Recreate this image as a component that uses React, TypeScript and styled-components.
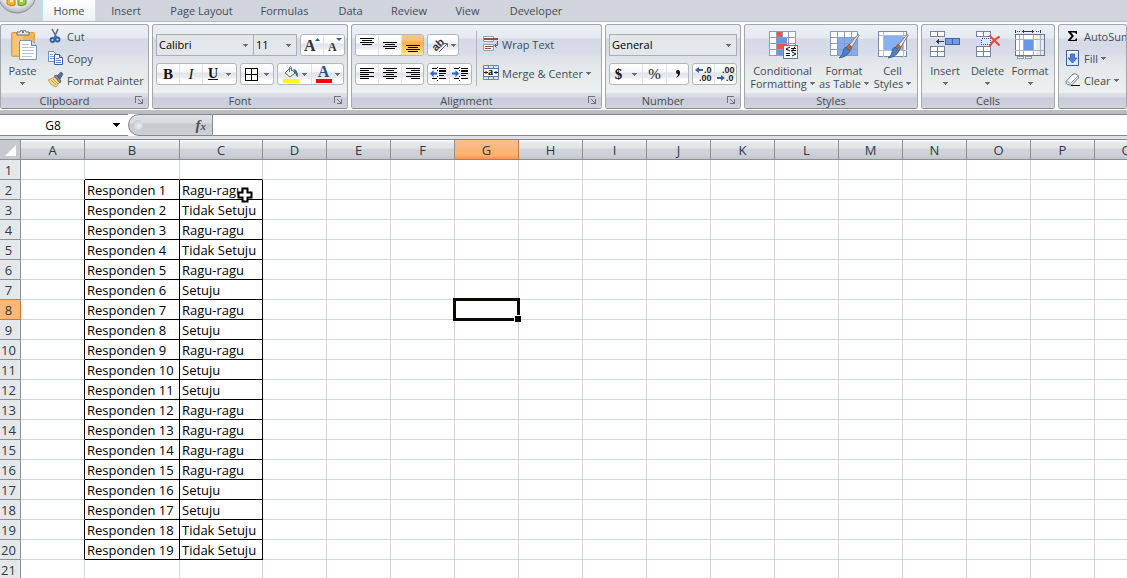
import React from "react";
import styled, { createGlobalStyle, css } from "styled-components";

const GlobalStyle = createGlobalStyle`
  * { box-sizing: border-box; }
  body { margin: 0; background: #fff; }
  button, input, select { font: inherit; color: inherit; margin: 0; }
`;

const uiFont = `"Open Sans", "Noto Sans", sans-serif`;

const Window = styled.div`
  display: flex;
  flex-direction: column;
  height: 100vh;
  overflow: hidden;
  background: #fff;
  color: #454c55;
  font: 11px/13px ${uiFont};
`;

/* ---------- Tab strip ---------- */

const TabStrip = styled.nav`
  display: flex;
  flex: none;
  height: 22px;
  overflow: hidden;
  background: #d0d4dc;
  border-bottom: 1px solid #b4b8bf;
`;

const OfficeButton = styled.button`
  flex: none;
  width: 42px;
  height: 22px;
  padding: 0;
  border: 0;
  background: none;
`;

const Tab = styled.button<{ $width: number; $active?: boolean }>`
  flex: none;
  width: ${(p) => p.$width}px;
  height: 22px;
  padding: 0 0 1px;
  border: 1px solid transparent;
  border-width: 0 1px;
  background: none;
  white-space: nowrap;
  ${(p) =>
    p.$active &&
    css`
      background: linear-gradient(#fff, #f2f5f9 60%, #eceff5);
      border-color: #b9e6ee;
    `}
`;

/* ---------- Ribbon ---------- */

const Ribbon = styled.div`
  display: flex;
  flex: none;
  gap: 3px;
  padding: 2px 0 1px;
  background: #fff;
`;

const Group = styled.section<{ $width?: number }>`
  display: flex;
  flex-direction: column;
  flex: ${(p) => (p.$width ? `0 0 ${p.$width}px` : "1 0 0")};
  min-width: 0;
  overflow: hidden;
  height: 85px;
  border: 1px solid #a3a6ab;
  border-bottom-color: #85888e;
  border-radius: 3px;
  background: linear-gradient(
    #eceff5 0,
    #e5e9f1 13px,
    #d4d9e6 14px,
    #d7dce8 28px,
    #dfe3ea 33px,
    #e5e9eb 45px,
    #ebf0f0 68px
  );
`;

const GroupBody = styled.div<{ $left?: number; $gap?: number }>`
  display: flex;
  flex: 1;
  gap: ${(p) => p.$gap ?? 0}px;
  padding-left: ${(p) => p.$left ?? 3}px;
`;

const GroupTitle = styled.footer`
  display: flex;
  align-items: center;
  flex: none;
  height: 15px;
  padding: 0 4px;
  background: linear-gradient(#dde1ea 0, #d6dae4 4px, #c9cddb 5px, #ccd0db 11px, #d0d4dc);

  h2 {
    flex: 1;
    margin: 0;
    font: inherit;
    text-align: center;
    white-space: nowrap;
  }
`;

const Launcher = styled.button`
  display: flex;
  justify-content: flex-end;
  width: 20px;
  padding: 0;
  border: 0;
  background: none;
`;

const Rows = styled.div`
  display: flex;
  flex-direction: column;
  gap: 7px;
  padding-top: 9px;
`;

const Row = styled.div<{ $gap?: number }>`
  display: flex;
  gap: ${(p) => p.$gap ?? 3}px;
`;

const ButtonSet = styled.div`
  display: flex;
  height: 22px;
  border: 1px solid #b4b6ba;
  border-radius: 3px;
  overflow: hidden;
  background: linear-gradient(#fff 0, #f6f7f9 8px, #e0e3ea 9px, #eceef2 14px, #fdfdfd 15px);
`;

const SetButton = styled.button<{ $width: number; $on?: boolean; $gap?: number }>`
  display: flex;
  align-items: center;
  justify-content: center;
  gap: ${(p) => p.$gap ?? 6}px;
  width: ${(p) => p.$width}px;
  padding: 0;
  border: 0;
  background: ${(p) =>
    p.$on ? "linear-gradient(#f0c98e 0, #fbc06f 6px, #ffab4b 8px, #ffc86a 14px, #ffea9a)" : "none"};
  color: #111;

  & + & {
    border-left: 1px solid #dfe1e5;
  }
  svg {
    flex: none;
  }
`;

const Glyph = styled.span<{ $size?: number; $bold?: boolean; $italic?: boolean; $underline?: boolean }>`
  font-family: "Liberation Serif", serif;
  font-size: ${(p) => p.$size ?? 15}px;
  line-height: 16px;
  font-weight: ${(p) => (p.$bold ? 700 : 400)};
  font-style: ${(p) => (p.$italic ? "italic" : "normal")};
  text-decoration: ${(p) => (p.$underline ? "underline" : "none")};
`;

const Combo = styled.span<{ $width: number }>`
  display: grid;
  align-items: center;
  width: ${(p) => p.$width}px;
  height: 22px;
  color: #000;

  select,
  svg {
    grid-area: 1 / 1;
  }
  select {
    appearance: none;
    width: 100%;
    height: 22px;
    padding: 0 2px 2px;
    border: 1px solid #abafb4;
    border-radius: 0;
    background: #e3e7ea;
  }
  svg {
    justify-self: end;
    margin-right: 6px;
    pointer-events: none;
  }
`;

const ComboRow = styled(Row)`
  ${Combo} + ${Combo} {
    margin-left: -4px;
  }
`;

const Divider = styled.span`
  width: 1px;
  height: 55px;
  margin: 6px 2px 0 4px;
  background: #b3b6bd;
`;

const LabelButton = styled.button`
  display: flex;
  align-items: center;
  gap: 3px;
  height: 22px;
  padding: 0 0 2px;
  border: 0;
  background: none;
  white-space: nowrap;
`;

const LabelStack = styled.div`
  display: flex;
  flex-direction: column;
  align-items: flex-start;
  padding-top: 1px;
`;

const BigButton = styled.button<{ $width: number }>`
  display: flex;
  flex-direction: column;
  align-items: center;
  flex: none;
  width: ${(p) => p.$width}px;
  padding: 5px 0 0;
  border: 0;
  background: none;
  white-space: nowrap;

  > svg {
    flex: none;
    margin-bottom: 2px;
  }
`;

const SecondLine = styled.span`
  display: flex;
  align-items: center;
  justify-content: center;
  gap: 3px;
  height: 13px;
`;

/* ---------- Formula bar ---------- */

const FormulaBar = styled.div`
  display: flex;
  flex: none;
  height: 29px;
  border-top: 4px solid #bbbdc3;
  border-bottom: 3px solid #dde1ea;
  background: #fff;
  color: #000;
`;

const NameBox = styled.div`
  display: flex;
  align-items: center;
  width: 128px;
  border: solid #85878b;
  border-width: 1px 0;

  input {
    width: 106px;
    padding: 0;
    border: 0;
    background: none;
    text-align: center;
    font-size: 12px;
  }
  button {
    width: 22px;
    padding: 0;
    border: 0;
    background: none;
  }
  svg {
    display: block;
    margin: 0 auto;
  }
`;

const FunctionPill = styled.div`
  display: flex;
  align-items: center;
  justify-content: space-between;
  width: 85px;
  padding: 0 6px 0 4px;
  border: 1px solid #85878b;
  border-radius: 11px 0 0 11px;
  background: linear-gradient(#dfe2e4 0, #d6dadd 8px, #c5c8ce 9px, #cdd0d4);

  button {
    padding: 0;
    border: 0;
    background: none;
    color: #4a4f5c;
    font: italic 700 15px/16px "Liberation Serif", serif;
  }
  small {
    font-size: 11px;
  }
`;

const Dimple = styled.span`
  width: 10px;
  height: 10px;
  border-radius: 50%;
  background: radial-gradient(circle at 60% 60%, #eef0f1, #b9bcc2);
`;

const FormulaInput = styled.input`
  flex: 1;
  min-width: 0;
  padding: 0 4px;
  border: solid #85878b;
  border-width: 1px 0;
  border-radius: 0;
  background: #fff;
`;

/* ---------- Sheet ---------- */

const Sheet = styled.main`
  flex: 1;
  overflow: hidden;
  border-top: 1px solid #85878f;
`;

const Grid = styled.table`
  width: max-content;
  table-layout: fixed;
  border-collapse: separate;
  border-spacing: 0;
  color: #000;
  font-size: 13px;
  line-height: 17px;
`;

const ColumnHead = styled.th<{ $width: number; $selected?: boolean }>`
  width: ${(p) => p.$width}px;
  height: 20px;
  padding: 2px 0 0;
  border: solid #8c8f94;
  border-width: 0 1px 1px 0;
  background: linear-gradient(#fbfbfc 0, #e6e9ea 3px, #e0e4e7 8px, #d0d4da 9px, #ced2d8 14px, #c3c6ca);
  color: #2b3a44;
  font-weight: 400;
  ${(p) =>
    p.$selected &&
    css`
      border-color: #cf7440;
      background: linear-gradient(#fac090 0, #f9b582 9px, #ffb56e 10px, #ffb470 15px, #f9915c);
    `}
`;

const Corner = styled(ColumnHead)`
  background: #c6c9ce;

  svg {
    display: block;
    margin-left: 5px;
  }
`;

const RowHead = styled.th<{ $selected?: boolean }>`
  height: 20px;
  padding: 2px 3px 0 0;
  border: solid #8c8f94;
  border-width: 0 1px 1px 0;
  background: ${(p) => (p.$selected ? "#fdb878" : "#e4e8ea")};
  border-color: ${(p) => (p.$selected ? "#cf7440" : "#8c8f94")};
  color: #2b3a44;
  font-weight: 400;
`;

const Cell = styled.td<{ $right?: boolean; $bottom?: boolean }>`
  position: relative;
  height: 20px;
  padding: 2px 0 0 2px;
  border: solid #d0d5e5;
  border-width: 0 1px 1px 0;
  border-right-color: ${(p) => (p.$right ? "#000" : "#d0d5e5")};
  border-bottom-color: ${(p) => (p.$bottom ? "#000" : "#d0d5e5")};
  white-space: nowrap;
`;

const Selection = styled.div`
  position: absolute;
  inset: -2px;
  z-index: 1;
  border: 3px solid #0d0905;

  &::after {
    content: "";
    position: absolute;
    right: -4px;
    bottom: -4px;
    width: 6px;
    height: 6px;
    background: #000;
    border: solid #fff;
    border-width: 1px 0 0 1px;
  }
`;

const Pointer = styled.svg`
  position: absolute;
  left: 57px;
  top: 7px;
  z-index: 2;
`;

/* ---------- Icons ---------- */

const Arrow = ({ color = "#6b6e74" }: { color?: string }) => (
  <svg width="5" height="3" viewBox="0 0 5 3" shapeRendering="crispEdges" aria-hidden="true">
    <path d="M0 0h5v1H4v1H3v1H2V2H1V1H0z" fill={color} />
  </svg>
);

const Lines = ({ rows, y }: { rows: [number, number][]; y: number }) => (
  <svg width="16" height="16" shapeRendering="crispEdges" aria-hidden="true">
    {rows.map(([x, w], i) => (
      <rect key={i} x={x} y={y + i * 2} width={w} height="1" fill="#000" />
    ))}
  </svg>
);

const OfficeLogo = () => (
  <svg width="42" height="22" aria-hidden="true">
    <defs>
      <radialGradient id="orb" cx="50%" cy="40%" r="60%">
        <stop offset="0" stopColor="#fff" />
        <stop offset="0.75" stopColor="#dfe1e6" />
        <stop offset="1" stopColor="#a9adb5" />
      </radialGradient>
    </defs>
    <circle cx="17" cy="-6" r="19" fill="url(#orb)" stroke="#8b8f97" />
    <path d="M7-4h8v9q-4 2-8-1z" fill="#f6b62f" stroke="#d9760f" />
    <path d="M10-2h3v4h-3z" fill="#fff2c4" />
    <path d="M18-4h8v8q-4 3-8 1z" fill="#9cca3c" stroke="#5d9a1d" />
    <path d="M20-2h3v4h-3z" fill="#ecf7cf" />
  </svg>
);

const PasteIcon = () => (
  <svg width="32" height="32" aria-hidden="true">
    <rect x="4.500" y="2.500" width="23" height="24" rx="1" fill="#f0b65a" stroke="#d9a04a" />
    <path d="M6 4h10v21H6z" fill="#f8cc80" opacity=".7" />
    <path d="M10 5V2h3q0-2 3-2t3 2h3v3z" fill="#e6e8ec" stroke="#6b6e75" />
    <circle cx="16" cy="2" r="1" fill="#555" />
    <path d="M12.500 10.500h12l5 5v14h-17z" fill="#fff" stroke="#7f93b8" />
    <path d="M24.500 10.500v5h5" fill="#cfdcf3" stroke="#6481b5" />
    <path d="M15 14.500h7M15 17.500h12M15 20.500h12M15 23.500h12M15 26.500h10" stroke="#b6c2d8" />
  </svg>
);

const CutIcon = () => (
  <svg width="16" height="16" fill="none" aria-hidden="true">
    <path d="M4 1l5 9M10 1L6 10" stroke="#54698d" strokeWidth="1.500" />
    <ellipse cx="4.500" cy="12" rx="2" ry="2" stroke="#2f5ea8" strokeWidth="1.800" />
    <ellipse cx="9.500" cy="11.500" rx="2" ry="2" stroke="#2f5ea8" strokeWidth="1.800" />
  </svg>
);

const CopyIcon = () => (
  <svg width="16" height="16" aria-hidden="true">
    <path d="M.5 1.500h5l3 3v7h-8z" fill="#f8fbff" stroke="#6d8fc9" />
    <path d="M2 4.500h3M2 6.500h4M2 8.500h4" stroke="#7ba2de" />
    <path d="M6.500 4.500h5l3 3v7h-8z" fill="#f8fbff" stroke="#35609f" />
    <path d="M11.500 4.500v3h3" fill="#bcd2f5" stroke="#35609f" />
    <path d="M8 8.500h3M8 10.500h5M8 12.500h5" stroke="#5d8ad0" />
  </svg>
);

const PainterIcon = () => (
  <svg width="16" height="16" aria-hidden="true">
    <path d="M0 8l7-3 5 5-4 5q-5-1-8-7z" fill="#f5d785" stroke="#b8944a" strokeWidth=".8" />
    <path d="M3 8l5 5M5 7l5 5" stroke="#c79f4c" />
    <path d="M6 4l3-1 4 6-1 2z" fill="#8d8f9c" stroke="#4c4d58" strokeWidth=".7" />
    <path d="M9 4l4-4 2 2-3 5z" fill="#5c6f9c" stroke="#3a4a70" strokeWidth=".7" />
  </svg>
);

const LauncherIcon = () => (
  <svg width="9" height="9" shapeRendering="crispEdges" aria-hidden="true">
    <path d="M0 0h7v1H1v6H0z" fill="#6f737b" />
    <path d="M3 3h1v1h1v1h1v1h1V3h1v5H3V7h3V6H5V5H4V4H3z" fill="#6f737b" />
  </svg>
);

const BordersIcon = () => (
  <svg width="13" height="13" shapeRendering="crispEdges" aria-hidden="true">
    <path d="M.5.5h12v12H.5zM6.500 0v13M0 6.500h13" fill="#fff" stroke="#000" />
  </svg>
);

const FillColorIcon = () => (
  <svg width="16" height="18" aria-hidden="true">
    <path d="M2 8l5-5 5 5-5 4z" fill="#eef3fb" stroke="#5a6a86" />
    <path d="M6.500 7V2.500q1.500-2 2 0V6" fill="none" stroke="#5a6a86" />
    <path d="M10 4q5 0 5 8-2-1-3-4z" fill="#3a62ad" />
    <path d="M0 14h16v4H0z" fill="#ff0" />
  </svg>
);

const FontColorBar = styled.span`
  display: block;
  width: 16px;
  height: 18px;
  border-bottom: 4px solid #f00;
  color: #2c4f92;
  font: 700 16px/14px "Liberation Serif", serif;
`;

const OrientationIcon = () => (
  <svg width="18" height="20" aria-hidden="true">
    <text x="0" y="13" transform="rotate(-45 7 9)" fontFamily="Liberation Sans, sans-serif" fontSize="11" fontWeight="700" fill="#333">
      ab
    </text>
    <path d="M8 17l8-8M13 8.500h3.500V12" fill="none" stroke="#7a5a72" />
  </svg>
);

const IndentIcon = ({ right }: { right?: boolean }) => (
  <svg width="17" height="16" aria-hidden="true">
    <g shapeRendering="crispEdges" fill="#000">
      <path d="M2 2h5v1H2zM9 2h7v1H9zM9 5h7v1H9zM9 7h7v1H9zM9 9h5v1H9zM2 12h5v1H2zM9 12h7v1H9z" />
      <path d="M7 1h1v1H7zM7 4h1v1H7zM7 10h1v1H7zM7 14h1v1H7zM9 4h7v1H9z" />
    </g>
    <path d={right ? "M7 7.500L3.500 4v2.500H0v2h3.500V11z" : "M0 7.500L3.500 4v2.500H7v2H3.500V11z"} fill="#2f62c0" />
  </svg>
);

const WrapIcon = () => (
  <svg width="16" height="16" aria-hidden="true">
    <path d="M.5.5h10v5H.5zM.5 8.500h10v6H.5z" fill="#fff" stroke="#8fa0ba" />
    <path d="M1 2h14v2H1z" fill="#8f4f30" />
    <path d="M2 10.500h8M2 12.500h6" stroke="#a0522d" />
    <path d="M14.500 5v4.500H12M13.500 7.500l-2 2 2 2" fill="none" stroke="#44629a" />
  </svg>
);

const MergeIcon = () => (
  <svg width="16" height="16" aria-hidden="true">
    <path d="M.5.5h15v14H.5zM5.500.5v3M10.500.5v3M5.500 11.500v3M10.500 11.500v3" fill="#dce9f8" stroke="#6487b5" />
    <path d="M.5 3.500h15v8H.5z" fill="#fff" stroke="#4775a8" />
    <path d="M1 7.500h4M11 7.500h4M3 6v3M13 6v3" stroke="#222" />
    <text x="5" y="10" fontFamily="Liberation Serif, serif" fontSize="10" fontWeight="700" fill="#000">a</text>
  </svg>
);

const DecimalIcon = ({ more }: { more?: boolean }) => (
  <svg width="18" height="18" aria-hidden="true">
    <g fontFamily="Liberation Sans, sans-serif" fontSize="9" fontWeight="700" fill="#222">
      <text x={more ? 9 : 5} y="8">{more ? ".0" : ".00"}</text>
      <text x={more ? 4 : 9} y="16">{more ? ".00" : ".0"}</text>
    </g>
    {more ? (
      <path d="M0 5l4-3v2h4v2H4v2z" fill="#2f5fb0" />
    ) : (
      <path d="M8 13l-4-3v2H0v2h4v2z" fill="#2f5fb0" />
    )}
  </svg>
);

const ConditionalIcon = () => (
  <svg width="32" height="32" aria-hidden="true">
    <g shapeRendering="crispEdges">
      <path d="M2 1h27v25H2z" fill="#fff" />
      <path d="M9 1h7v7H9zM9 13h11v7H9z" fill="#f4563e" />
      <path d="M9 7h11v6H9zM9 20h7v6H9z" fill="#6a93ea" />
      <path d="M2.500 1v25M9.500 1v25M15.500 1v6M15.500 20v6M21.500 1v25M28.500 1v25M2 1.500h27M2 7.500h27M2 13.500h27M2 19.500h27M2 25.500h14" stroke="#8d9dbd" fill="none" />
      <path d="M16.500 15.500h14v13h-14z" fill="#f6f9fb" stroke="#627fa0" />
    </g>
    <path d="M23 17l-4 2 4 2M19 23.500h4M19 25.500h4M24 18.500h5M24 20.500h5M28 16.500l-3 5M25 22l4 2-4 2" fill="none" stroke="#111" />
  </svg>
);

const Brush = () => (
  <g>
    <path d="M31 5.500l-8 13-3-2 9-11q2-2 2 0z" fill="#e9e4de" stroke="#7e7a78" />
    <path d="M24 17l-2 4-4-3 3-4z" fill="#b06a3c" stroke="#7c4a2c" strokeWidth=".6" />
    <path d="M18 17l4 4q-3 6-11 7 4-3 4-6 0-4 3-5z" fill="#4f7dc0" stroke="#34598f" strokeWidth=".8" />
  </g>
);

const FormatTableIcon = () => (
  <svg width="32" height="32" aria-hidden="true">
    <g shapeRendering="crispEdges">
      <path d="M2 1h28v25H2z" fill="#fff" />
      <path d="M9 7h21v19H9z" fill="#86acf0" />
      <path d="M2 1.500h28M2 7.500h28M2 13.500h28M2 19.500h28M2 25.500h28M2.500 1v25M9.500 1v25M16.500 1v25M23.500 1v25M29.500 1v25" stroke="#8b9cc0" />
    </g>
    <Brush />
  </svg>
);

const CellStylesIcon = () => (
  <svg width="32" height="32" aria-hidden="true">
    <g shapeRendering="crispEdges">
      <path d="M1.500 1.500h28v25h-28z" fill="#fff" stroke="#7b8aab" />
      <path d="M7 6h19v14H7z" fill="#88b0f4" />
      <path d="M2 5.500h28M2 20.500h28M6.500 2v25M26.500 2v25" stroke="#b3bdcf" />
    </g>
    <Brush />
  </svg>
);

const InsertIcon = () => (
  <svg width="32" height="32" shapeRendering="crispEdges" aria-hidden="true">
    <path d="M1.500 1.500h14v5h-14zM8.500 1v6M1.500 16.500h14v10h-14zM8.500 16v11M1 21.500h15" fill="#fff" stroke="#7682a0" />
    <path d="M16.500 8.500h14v6h-14z" fill="#6f9cec" stroke="#44639c" />
    <path d="M23.500 8v7" stroke="#44639c" />
    <path d="M7 11h8v1H7zM8 10h1v3H8zM9 9h1v5H9z" fill="#2d3b55" />
  </svg>
);

const DeleteIcon = () => (
  <svg width="32" height="32" aria-hidden="true">
    <g shapeRendering="crispEdges">
      <path d="M4.500 1.500h14v5h-14zM11.500 1v6M4.500 16.500h14v10h-14zM11.500 16v11M4 21.500h15" fill="#fff" stroke="#7682a0" />
      <path d="M9.500 8.500h9v6h-9z" fill="#dfe9fb" stroke="#3b5fa8" strokeDasharray="1 1" />
    </g>
    <path d="M18 6l9 9M27 7q-6 3-9 9" fill="none" stroke="#f2492c" strokeWidth="2" strokeLinecap="round" />
  </svg>
);

const FormatIcon = () => (
  <svg width="32" height="32" shapeRendering="crispEdges" aria-hidden="true">
    <path d="M1 0h1v3H1zM26 0h1v3h-1zM9 0h1v3H9zM18 0h1v3h-1zM8 1h12v1H8zM3 1h1v1H3zM5 1h1v1H5zM22 1h1v1h-1zM24 1h1v1h-1z" fill="#2d3b55" />
    <path d="M1.500 4.500h29v21h-29z" fill="#fff" stroke="#69758f" />
    <path d="M22 5h8v20h-8z" fill="#e7ebee" />
    <path d="M10 10h9v10h-9z" fill="#6796ea" />
    <path d="M1 9.500h29M1 20.500h29M9.500 5v20M19.500 5v20M26.500 5v20M5.500 5v20" stroke="#a9b2c4" />
    <path d="M3 26h6v2H3zM11 26h6v2h-6z" fill="#fff" stroke="#8b96ad" />
  </svg>
);

const SumIcon = () => (
  <svg width="16" height="16" aria-hidden="true">
    <path d="M3 3h9v3h-1l-1-1.500H6L9 8l-3.500 4H10l1-1.500h1V13H3v-1l3.500-4L3 4z" fill="#000" />
  </svg>
);

const FillIcon = () => (
  <svg width="16" height="16" aria-hidden="true">
    <path d="M1.500.5h12v15h-12z" fill="#dbe8fa" stroke="#39629f" />
    <path d="M2 1h11v2H2z" fill="#fff" />
    <path d="M5.500 4h4v4H12l-4.500 5L3 8h2.500z" fill="#4a80d8" stroke="#2c59a5" strokeWidth=".7" />
  </svg>
);

const ClearIcon = () => (
  <svg width="16" height="16" aria-hidden="true">
    <path d="M1 9.500L8 2q3-1 5 1.500L13.500 6l-7 7H4Q0 12 1 9.500z" fill="#fff" stroke="#6b7587" />
    <path d="M1 9.500Q4 9 6.500 13M6 11l7-7" fill="none" stroke="#8c9db8" />
    <path d="M6 13.500h9" stroke="#111" />
  </svg>
);

/* ---------- Data ---------- */

const tabs: [string, number][] = [
  ["Home", 54],
  ["Insert", 60],
  ["Page Layout", 91],
  ["Formulas", 75],
  ["Data", 57],
  ["Review", 60],
  ["View", 57],
  ["Developer", 80],
];

const columns = "ABCDEFGHIJKLMNOPQ".split("");
const columnWidth = (name: string) => (name === "B" ? 95 : name === "C" ? 83 : 64);

const R = "Ragu-ragu";
const S = "Setuju";
const T = "Tidak Setuju";
const answers = [R, T, R, T, R, S, R, S, R, S, S, R, R, R, R, S, S, T, T];
const rows = Array.from({ length: 21 }, (_, i) => i + 1);

const cellText = (column: string, row: number) => {
  if (row < 2 || row > 20) return "";
  if (column === "B") return `Responden ${row - 1}`;
  if (column === "C") return answers[row - 2];
  return "";
};

const Title = ({ children, launcher }: { children: string; launcher?: boolean }) => (
  <GroupTitle>
    <h2>{children}</h2>
    {launcher && (
      <Launcher aria-label={`${children} options`}>
        <LauncherIcon />
      </Launcher>
    )}
  </GroupTitle>
);

export default function App() {
  return (
    <Window>
      <GlobalStyle />
      <TabStrip>
        <OfficeButton aria-label="Office">
          <OfficeLogo />
        </OfficeButton>
        {tabs.map(([name, width]) => (
          <Tab key={name} $width={width} $active={name === "Home"}>
            {name}
          </Tab>
        ))}
      </TabStrip>

      <Ribbon>
        <Group $width={149}>
          <GroupBody $left={0} $gap={4}>
            <BigButton $width={43}>
              <PasteIcon />
              Paste
              <SecondLine>
                <Arrow />
              </SecondLine>
            </BigButton>
            <LabelStack>
              <LabelButton><CutIcon />Cut</LabelButton>
              <LabelButton><CopyIcon />Copy</LabelButton>
              <LabelButton><PainterIcon />Format Painter</LabelButton>
            </LabelStack>
          </GroupBody>
          <Title launcher>Clipboard</Title>
        </Group>

        <Group $width={196}>
          <GroupBody>
            <Rows>
              <ComboRow>
                <Combo $width={98}>
                  <select aria-label="Font"><option>Calibri</option></select>
                  <Arrow />
                </Combo>
                <Combo $width={44}>
                  <select aria-label="Font size"><option>11</option></select>
                  <Arrow />
                </Combo>
                <ButtonSet>
                  <SetButton $width={22} aria-label="Grow font">
                    <svg width="20" height="20" aria-hidden="true">
                      <text x="2" y="16" fontFamily="Liberation Serif, serif" fontSize="16" fontWeight="700" fill="#333">A</text>
                      <path d="M13 6l2.500-3L18 6z" fill="#2f57a8" />
                    </svg>
                  </SetButton>
                  <SetButton $width={21} aria-label="Shrink font">
                    <svg width="20" height="20" aria-hidden="true">
                      <text x="4" y="16" fontFamily="Liberation Serif, serif" fontSize="12" fontWeight="700" fill="#333">A</text>
                      <path d="M12 3h6l-3 3z" fill="#2f57a8" />
                    </svg>
                  </SetButton>
                </ButtonSet>
              </ComboRow>
              <Row>
                <ButtonSet>
                  <SetButton $width={22}><Glyph $bold>B</Glyph></SetButton>
                  <SetButton $width={23}><Glyph $italic>I</Glyph></SetButton>
                  <SetButton $width={34} $gap={8}><Glyph $bold $underline $size={14}>U</Glyph><Arrow /></SetButton>
                </ButtonSet>
                <ButtonSet>
                  <SetButton $width={32} aria-label="Borders"><BordersIcon /><Arrow /></SetButton>
                </ButtonSet>
                <ButtonSet>
                  <SetButton $width={33} $gap={3} aria-label="Fill color"><FillColorIcon /><Arrow /></SetButton>
                  <SetButton $width={32} $gap={3} aria-label="Font color"><FontColorBar>A</FontColorBar><Arrow /></SetButton>
                </ButtonSet>
              </Row>
            </Rows>
          </GroupBody>
          <Title launcher>Font</Title>
        </Group>

        <Group $width={251}>
          <GroupBody>
            <Rows>
              <Row>
                <ButtonSet>
                  <SetButton $width={22} aria-label="Top align">
                    <Lines y={1} rows={[[1, 14], [3, 10], [1, 14], [3, 10]]} />
                  </SetButton>
                  <SetButton $width={23} aria-label="Middle align">
                    <Lines y={5} rows={[[1, 14], [3, 10], [1, 14], [3, 10]]} />
                  </SetButton>
                  <SetButton $width={22} $on aria-label="Bottom align">
                    <Lines y={8} rows={[[1, 14], [3, 10], [1, 14], [3, 10]]} />
                  </SetButton>
                </ButtonSet>
                <ButtonSet>
                  <SetButton $width={30} $gap={2} aria-label="Orientation"><OrientationIcon /><Arrow /></SetButton>
                </ButtonSet>
              </Row>
              <Row>
                <ButtonSet>
                  <SetButton $width={22} aria-label="Align left">
                    <Lines y={2} rows={[[1, 14], [1, 9], [1, 14], [1, 9], [1, 14], [1, 9]]} />
                  </SetButton>
                  <SetButton $width={23} aria-label="Center">
                    <Lines y={2} rows={[[1, 14], [4, 8], [1, 14], [4, 8], [1, 14], [4, 8]]} />
                  </SetButton>
                  <SetButton $width={22} aria-label="Align right">
                    <Lines y={2} rows={[[1, 14], [6, 9], [1, 14], [6, 9], [1, 14], [6, 9]]} />
                  </SetButton>
                </ButtonSet>
                <ButtonSet>
                  <SetButton $width={21} aria-label="Decrease indent"><IndentIcon /></SetButton>
                  <SetButton $width={22} aria-label="Increase indent"><IndentIcon right /></SetButton>
                </ButtonSet>
              </Row>
            </Rows>
            <Divider />
            <Rows>
              <Row $gap={4}>
                <span />
                <LabelButton><WrapIcon />Wrap Text</LabelButton>
              </Row>
              <Row $gap={4}>
                <span />
                <LabelButton><MergeIcon />Merge &amp; Center <Arrow /></LabelButton>
              </Row>
            </Rows>
          </GroupBody>
          <Title launcher>Alignment</Title>
        </Group>

        <Group $width={136}>
          <GroupBody>
            <Rows>
              <Combo $width={128}>
                <select aria-label="Number format"><option>General</option></select>
                <Arrow />
              </Combo>
              <Row>
                <ButtonSet>
                  <SetButton $width={32} $gap={10}><Glyph $bold>$</Glyph><Arrow /></SetButton>
                  <SetButton $width={24}><Glyph>%</Glyph></SetButton>
                  <SetButton $width={22} aria-label="Comma style">
                    <svg width="8" height="12" aria-hidden="true">
                      <path d="M2 4q0-2 2-2t2 3q0 3-4 5 2-2 2-4-2 0-2-2z" fill="#111" />
                    </svg>
                  </SetButton>
                </ButtonSet>
                <ButtonSet>
                  <SetButton $width={21} aria-label="Increase decimal"><DecimalIcon more /></SetButton>
                  <SetButton $width={22} aria-label="Decrease decimal"><DecimalIcon /></SetButton>
                </ButtonSet>
              </Row>
            </Rows>
          </GroupBody>
          <Title launcher>Number</Title>
        </Group>

        <Group $width={174}>
          <GroupBody $left={2}>
            <BigButton $width={71}>
              <ConditionalIcon />
              Conditional
              <SecondLine>Formatting <Arrow /></SecondLine>
            </BigButton>
            <BigButton $width={52}>
              <FormatTableIcon />
              Format
              <SecondLine>as Table <Arrow /></SecondLine>
            </BigButton>
            <BigButton $width={45}>
              <CellStylesIcon />
              Cell
              <SecondLine>Styles <Arrow /></SecondLine>
            </BigButton>
          </GroupBody>
          <Title>Styles</Title>
        </Group>

        <Group $width={134}>
          <GroupBody $left={2}>
            <BigButton $width={42}>
              <InsertIcon />
              Insert
              <SecondLine><Arrow /></SecondLine>
            </BigButton>
            <BigButton $width={43}>
              <DeleteIcon />
              Delete
              <SecondLine><Arrow /></SecondLine>
            </BigButton>
            <BigButton $width={42}>
              <FormatIcon />
              Format
              <SecondLine><Arrow /></SecondLine>
            </BigButton>
          </GroupBody>
          <Title>Cells</Title>
        </Group>

        <Group>
          <GroupBody $left={6}>
            <LabelStack>
              <LabelButton><SumIcon />AutoSum</LabelButton>
              <LabelButton><FillIcon />Fill <Arrow /></LabelButton>
              <LabelButton><ClearIcon />Clear <Arrow /></LabelButton>
            </LabelStack>
          </GroupBody>
          <GroupTitle />
        </Group>
      </Ribbon>

      <FormulaBar>
        <NameBox>
          <input aria-label="Name box" defaultValue="G8" />
          <button aria-label="Names">
            <svg width="8" height="4" aria-hidden="true" shapeRendering="crispEdges">
              <path d="M0 0h7v1H6v1H5v1H4v1H3V3H2V2H1V1H0z" fill="#000" />
            </svg>
          </button>
        </NameBox>
        <FunctionPill>
          <Dimple />
          <button aria-label="Insert function">f<small>x</small></button>
        </FunctionPill>
        <FormulaInput aria-label="Formula" />
      </FormulaBar>

      <Sheet>
        <Grid>
          <thead>
            <tr>
              <Corner $width={21} aria-label="Select all">
                <svg width="12" height="12" aria-hidden="true">
                  <path d="M11 0v11H0z" fill="#fbfbfb" />
                </svg>
              </Corner>
              {columns.map((c) => (
                <ColumnHead key={c} scope="col" $width={columnWidth(c)} $selected={c === "G"}>
                  {c}
                </ColumnHead>
              ))}
            </tr>
          </thead>
          <tbody>
            {rows.map((r) => {
              const inList = r >= 2 && r <= 20;
              return (
                <tr key={r}>
                  <RowHead scope="row" $selected={r === 8}>{r}</RowHead>
                  {columns.map((c) => {
                    const listColumn = c === "B" || c === "C";
                    return (
                      <Cell
                        key={c}
                        $right={inList && (listColumn || c === "A")}
                        $bottom={listColumn && r <= 20}
                      >
                        {cellText(c, r)}
                        {c === "G" && r === 8 && <Selection />}
                        {c === "C" && r === 2 && (
                          <Pointer width="16" height="17" aria-hidden="true">
                            <path
                              d="M5.500 1.500h5v4h4v5h-4v4h-5v-4h-4v-5h4z"
                              fill="#fff"
                              stroke="#000"
                              strokeWidth="2"
                            />
                          </Pointer>
                        )}
                      </Cell>
                    );
                  })}
                </tr>
              );
            })}
          </tbody>
        </Grid>
      </Sheet>
    </Window>
  );
}
